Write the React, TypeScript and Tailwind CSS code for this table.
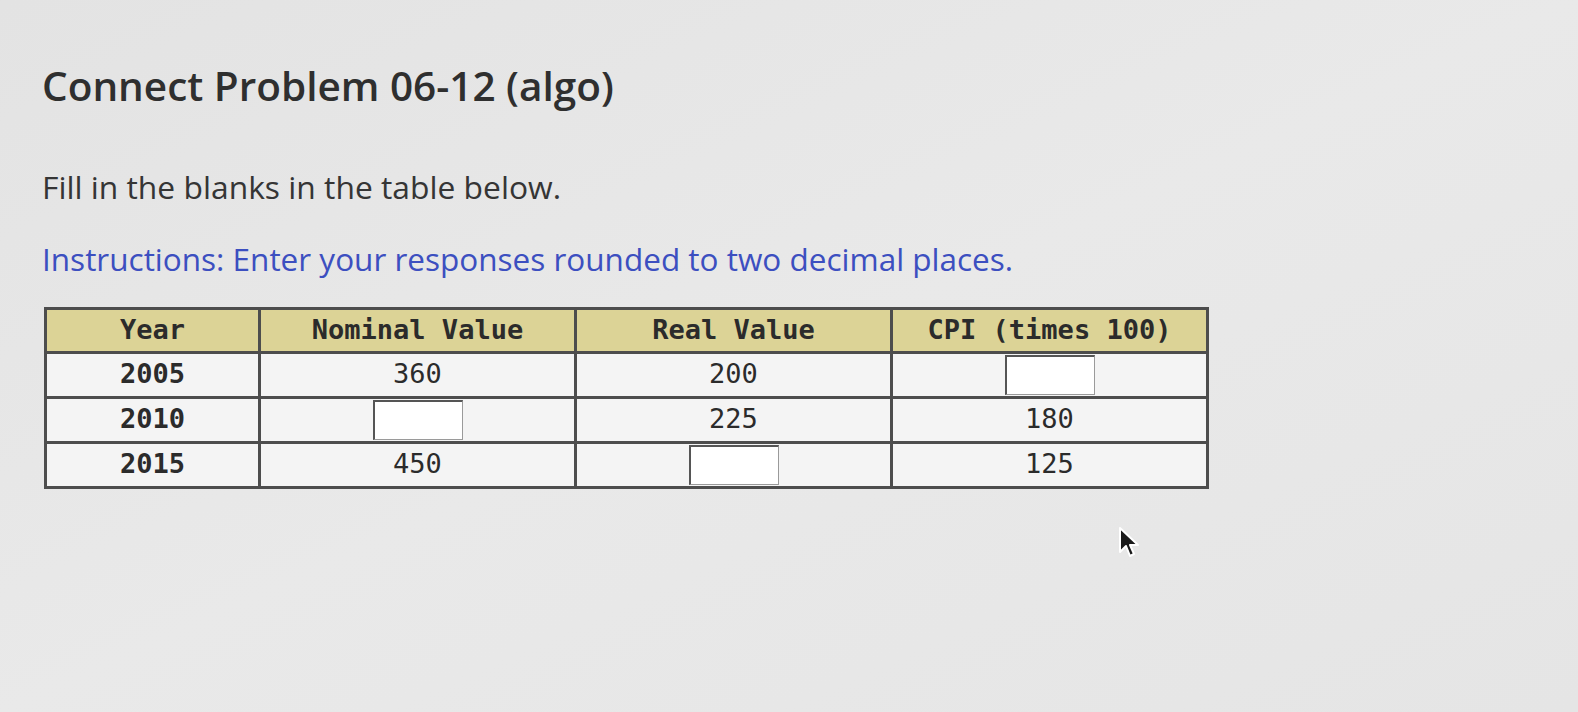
import React from 'react';

const rows = [
  { year: '2005', nominal: '360', real: '200', cpi: null },
  { year: '2010', nominal: null, real: '225', cpi: '180' },
  { year: '2015', nominal: '450', real: null, cpi: '125' },
];

const Blank: React.FC = () => (
  <input
    type="text"
    className="w-[90px] h-[40px] bg-white border border-[#9a9a9a] border-t-[2px] border-l-[2px] border-t-[#555] border-l-[#555] align-middle outline-none"
  />
);

const Cell: React.FC<{ value: string | null; bold?: boolean }> = ({ value, bold }) => (
  <td className={`border-[3px] border-[#4d4d4d] text-center h-[45px] p-0 ${bold ? 'font-bold' : ''}`}>
    {value ?? <Blank />}
  </td>
);

const App: React.FC = () => {
  return (
    <div className="relative w-[1578px] h-[712px] overflow-hidden bg-gradient-to-br from-[#e3e3e3] via-[#e9e9e9] to-[#e5e5e5] pl-[42px] pt-[57px]" style={{ fontFamily: '"Open Sans", Lato, sans-serif' }}>
      <h1 className="text-[40.5px] font-semibold text-[#2f2f2f] leading-[58px]">Connect Problem 06-12 (algo)</h1>
      <p className="mt-[52px] text-[31.8px] text-[#353535] leading-[40px]">Fill in the blanks in the table below.</p>
      <p className="mt-[32px] text-[31.5px] text-[#3c4fc0] leading-[40px]">
        Instructions: Enter your responses rounded to two decimal places.
      </p>

      <table
        className="mt-[28px] ml-[2px] border-collapse border-[3px] border-[#4d4d4d] text-[27px] text-[#2b2b2b] bg-[#f4f4f4]"
        style={{ fontFamily: '"DejaVu Sans Mono", monospace' }}
      >
        <thead>
          <tr className="bg-[#dcd396]">
            <th className="w-[214px] h-[43px] border-[3px] border-[#4d4d4d] font-bold">Year</th>
            <th className="w-[316px] border-[3px] border-[#4d4d4d] font-bold">Nominal Value</th>
            <th className="w-[316px] border-[3px] border-[#4d4d4d] font-bold">Real Value</th>
            <th className="w-[316px] border-[3px] border-[#4d4d4d] font-bold">CPI (times 100)</th>
          </tr>
        </thead>
        <tbody>
          {rows.map((r) => (
            <tr key={r.year}>
              <Cell value={r.year} bold />
              <Cell value={r.nominal} />
              <Cell value={r.real} />
              <Cell value={r.cpi} />
            </tr>
          ))}
        </tbody>
      </table>

      {/* mouse pointer */}
      <svg className="absolute left-[1118px] top-[526px]" width="26" height="34" viewBox="0 0 26 34">
        <path d="M2 2 L2 26 L8 20 L12 30 L16 28 L12 19 L20 19 Z" fill="#1a1a1a" stroke="#fff" strokeWidth="2" strokeLinejoin="round" />
      </svg>
    </div>
  );
};

export default App;
